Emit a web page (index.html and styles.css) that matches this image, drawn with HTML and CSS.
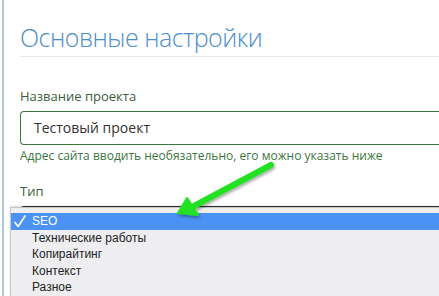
FILE: index.html
```html
<!DOCTYPE html>
<html lang="ru">
<head>
  <meta charset="UTF-8" />
  <title>Основные настройки</title>
  <link rel="stylesheet" href="styles.css">
</head>
<body>
  <div class="panel">
    <h1 class="title">Основные настройки</h1>

    <div class="field">
      <label class="label">Название проекта</label>
      <div class="input">Тестовый проект</div>
      <p class="help">Адрес сайта вводить необязательно, его можно указать ниже</p>
    </div>

    <div class="field">
      <label class="label">Тип</label>
      <div class="select"></div>
    </div>
  </div>

  <!-- открытый список -->
  <ul class="menu">
    <li class="item selected">
      <svg class="check" width="12" height="13" viewBox="0 0 12 13">
        <path d="M1 7.5 L4.2 11.5 L11 1" fill="none" stroke="#fff" stroke-width="1.7" stroke-linecap="round" stroke-linejoin="round"/>
      </svg>SEO
    </li>
    <li class="item">Технические работы</li>
    <li class="item">Копирайтинг</li>
    <li class="item">Контекст</li>
    <li class="item">Разное</li>
  </ul>

  <svg class="arrow" width="439" height="296" viewBox="0 0 439 296">
    <defs>
      <filter id="sh" x="-20%" y="-20%" width="140%" height="140%">
        <feDropShadow dx="1" dy="2" stdDeviation="1.5" flood-color="#000" flood-opacity="0.35"/>
      </filter>
    </defs>
    <g filter="url(#sh)" fill="#22e022" stroke="#22e022">
      <line x1="271" y1="165" x2="194" y2="206" stroke-width="6" stroke-linecap="round"/>
      <polygon points="178,213 187,198 198,215" stroke-width="2" stroke-linejoin="round"/>
    </g>
  </svg>
</body>
</html>
```

FILE: styles.css
```css
:root {
  --blue: #4c8dcb;
  --green: #3c763d;
  --menu-bg: #eeeef0;
  --pick: #4a93f4;
}

body {
  margin: 0;
  background: #fff;
  font-family: 'Open Sans', sans-serif;
  overflow: hidden;
  height: 296px;
  position: relative;
}

.panel {
  margin-left: 2px;
  border-left: 2px solid #a9c8dc;
  height: 296px;
  padding: 22px 0 0 16px;
  box-sizing: border-box;
}

.title {
  margin: 0;
  font-weight: 300;
  font-size: 25px;
  letter-spacing: -0.5px;
  line-height: 30px;
  color: var(--blue);
  padding-bottom: 4px;
  border-bottom: 1px solid #e6e6e6;
}

.field {
  margin-top: 30px;
}

.field + .field {
  margin-top: 18px;
}

.label {
  display: block;
  font-size: 13px;
  line-height: 18px;
  color: #3d5c3e;
  margin-bottom: 6px;
}

.input {
  border: 1px solid var(--green);
  border-right: none;
  border-radius: 4px 0 0 4px;
  height: 32px;
  line-height: 32px;
  padding-left: 13px;
  font-size: 14px;
  color: #333;
}

.help {
  margin: 2px 0 0;
  font-size: 12px;
  line-height: 17px;
  color: var(--green);
}

.select {
  border: 1px solid #333;
  border-right: none;
  border-radius: 4px 0 0 4px;
  height: 32px;
  background: #fafafa;
}

.menu {
  position: absolute;
  left: 10px;
  top: 207px;
  right: 0;
  bottom: 0;
  margin: 0;
  padding: 5px 0 0;
  overflow: hidden;
  list-style: none;
  background: var(--menu-bg);
  border-left: 1px solid #c8c8cc;
  border-top: 1px solid #c4c4c4;
  box-shadow: 0 -1px 2px rgba(0, 0, 0, 0.15);
  font-family: 'Liberation Sans', sans-serif;
  font-size: 12px;
  color: #222;
}

.item {
  height: 16.5px;
  line-height: 16px;
  padding-left: 21px;
}

.selected {
  display: flex;
  align-items: center;
  gap: 6px;
  background: var(--pick);
  color: #fff;
  padding-left: 3px;
}

.check {
  display: block;
}

.arrow {
  position: absolute;
  left: 0;
  top: 0;
  pointer-events: none;
}
```
